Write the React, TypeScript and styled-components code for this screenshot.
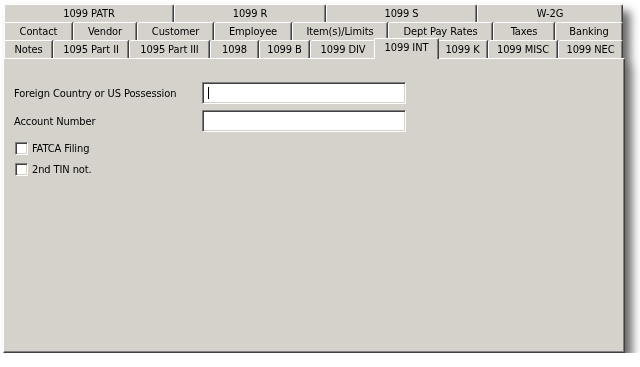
import React from "react";
import styled, { createGlobalStyle } from "styled-components";

const face = "#d4d2ca";
const uiFont = `"DejaVu Sans Condensed", "Liberation Sans", Arial, sans-serif`;

const GlobalStyle = createGlobalStyle`
  body {
    margin: 0;
    background: #fff;
    font-family: ${uiFont};
  }
`;

const Page = styled("div")`
  padding: 4px 0 0 3px;
`;

const Window = styled("div")`
  width: 622px;
  height: 349px;
  display: flex;
  flex-direction: column;
  filter: drop-shadow(7px 7px 5px rgba(0, 0, 0, 0.6));
`;

const TabStrip = styled("div")`
  display: flex;
  flex-direction: column;
  padding: 0 2px 0 1px;
`;

const TabRow = styled("div")`
  display: flex;
  height: 18px;
`;

const Tab = styled("div")<{ $w: number; $active?: boolean }>`
  flex: none;
  box-sizing: border-box;
  width: ${(p) => (p.$active ? p.$w + 4 : p.$w)}px;
  margin: ${(p) => (p.$active ? "-2px -2px -1px" : "0")};
  z-index: ${(p) => (p.$active ? 1 : 0)};
  display: flex;
  align-items: center;
  justify-content: center;
  padding-bottom: ${(p) => (p.$active ? 3 : 1)}px;
  background: ${face};
  border-top: 1px solid #fff;
  border-left: 1px solid #fff;
  border-right: 1px solid #404040;
  box-shadow: inset -1px 0 #808080;
  border-radius: 2px 2px 0 0;
  font-size: 11px;
  letter-spacing: -0.1px;
  color: #000;
  white-space: nowrap;
`;

const Panel = styled("div")`
  flex: 1;
  background: ${face};
  border-top: 1px solid #fff;
  border-left: 1px solid #fff;
  border-right: 1px solid #404040;
  border-bottom: 1px solid #404040;
  box-shadow: inset -1px -1px #808080;
  padding: 23px 0 0 10px;
`;

const Form = styled("div")`
  display: grid;
  grid-template-columns: 188px 204px;
  row-gap: 6px;
  align-items: center;
`;

const Label = styled("span")`
  font-size: 11px;
  letter-spacing: -0.1px;
  color: #000;
`;

const Field = styled("div")<{ $h: number }>`
  box-sizing: border-box;
  height: ${(p) => p.$h}px;
  background: #fff;
  border: 1px solid;
  border-color: #808080 #fff #fff #808080;
  box-shadow: inset 1px 1px #404040, inset -1px -1px ${face};
  display: flex;
  align-items: center;
  padding-left: 5px;
`;

const Caret = styled("span")`
  width: 1px;
  height: 12px;
  background: #000;
`;

const Checks = styled("div")`
  display: flex;
  flex-direction: column;
  gap: 8px;
  margin: 10px 0 0 1px;
`;

const CheckRow = styled("label")`
  display: flex;
  align-items: center;
  gap: 4px;
  height: 13px;
  font-size: 11px;
  letter-spacing: -0.1px;
  color: #000;
`;

const Box = styled("span")`
  box-sizing: border-box;
  width: 13px;
  height: 13px;
  background: #fff;
  border: 1px solid;
  border-color: #808080 #fff #fff #808080;
  box-shadow: inset 1px 1px #404040, inset -1px -1px ${face};
`;

type TabDef = [string, number];

const rows: TabDef[][] = [
  [
    ["1099 PATR", 170],
    ["1099 R", 152],
    ["1099 S", 151],
    ["W-2G", 146],
  ],
  [
    ["Contact", 69],
    ["Vendor", 64],
    ["Customer", 77],
    ["Employee", 78],
    ["Item(s)/Limits", 96],
    ["Dept Pay Rates", 105],
    ["Taxes", 62],
    ["Banking", 68],
  ],
  [
    ["Notes", 49],
    ["1095 Part II", 76],
    ["1095 Part III", 81],
    ["1098", 49],
    ["1099 B", 51],
    ["1099 DIV", 66],
    ["1099 INT", 61],
    ["1099 K", 51],
    ["1099 MISC", 70],
    ["1099 NEC", 65],
  ],
];

const activeTab = "1099 INT";

export default function App() {
  return (
    <Page>
      <GlobalStyle />
      <Window>
        <TabStrip>
          {rows.map((row, i) => (
            <TabRow key={i}>
              {row.map(([name, w]) => (
                <Tab key={name} $w={w} $active={name === activeTab}>
                  {name}
                </Tab>
              ))}
            </TabRow>
          ))}
        </TabStrip>
        <Panel>
          <Form>
            <Label>Foreign Country or US Possession</Label>
            <Field $h={22}>
              <Caret />
            </Field>
            <Label>Account Number</Label>
            <Field $h={22} />
          </Form>
          <Checks>
            <CheckRow>
              <Box />
              FATCA Filing
            </CheckRow>
            <CheckRow>
              <Box />
              2nd TIN not.
            </CheckRow>
          </Checks>
        </Panel>
      </Window>
    </Page>
  );
}
